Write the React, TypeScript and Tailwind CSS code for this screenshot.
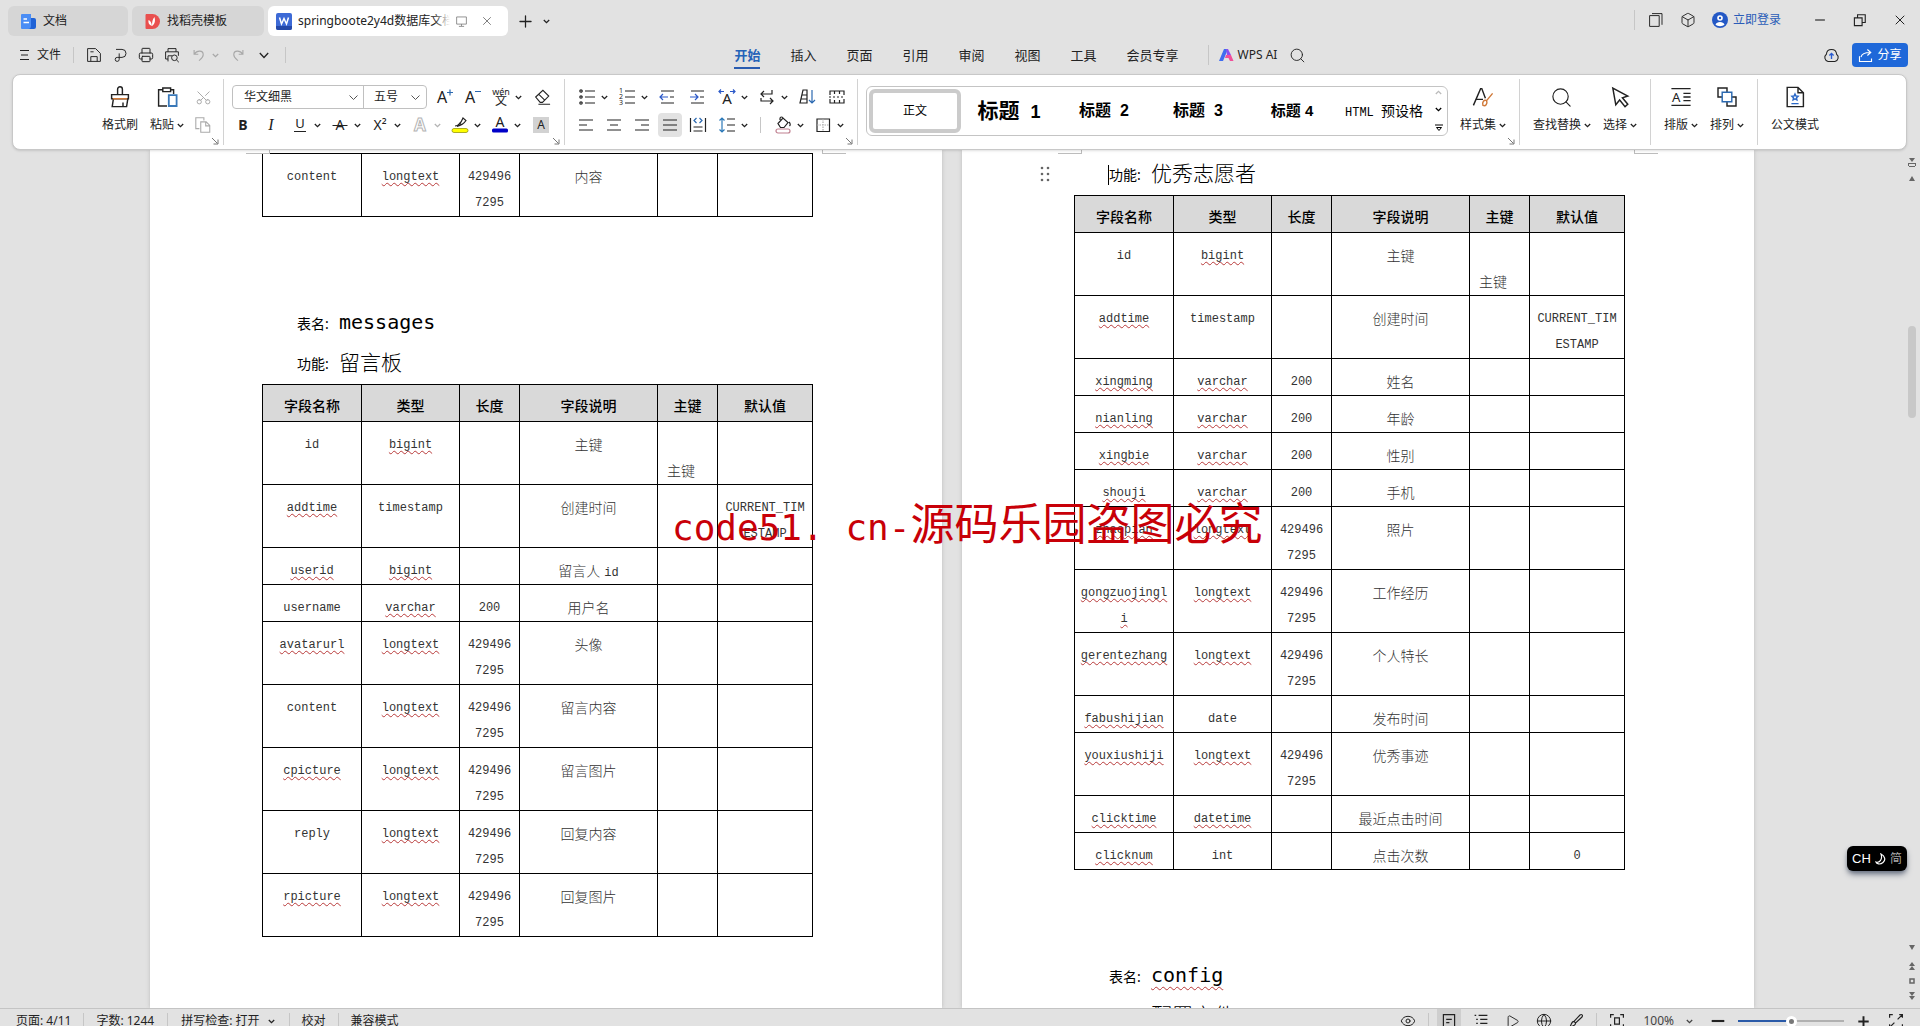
import React from 'react';
import { Box, Eye, Globe, Play, Plus, Printer, Scissors, Search, X } from 'lucide-react';

type Cell = { text: string; typo?: boolean };
type Row = { name: string; type: string; length?: string; note: React.ReactNode; keyed?: boolean; initial?: string };

const LONG = '429496\n7295';

const topRows: Row[] = [{ name: 'content', type: 'longtext', length: LONG, note: '内容' }];

const messageRows: Row[] = [
  { name: 'id', type: 'bigint', note: '主键', keyed: true },
  { name: 'addtime', type: 'timestamp', note: '创建时间', initial: 'CURRENT_TIM\nESTAMP' },
  { name: 'userid', type: 'bigint', note: <>留言人<span className="ml-1 font-['Liberation_Mono',monospace] text-xs font-normal">id</span></> },
  { name: 'username', type: 'varchar', length: '200', note: '用户名' },
  { name: 'avatarurl', type: 'longtext', length: LONG, note: '头像' },
  { name: 'content', type: 'longtext', length: LONG, note: '留言内容' },
  { name: 'cpicture', type: 'longtext', length: LONG, note: '留言图片' },
  { name: 'reply', type: 'longtext', length: LONG, note: '回复内容' },
  { name: 'rpicture', type: 'longtext', length: LONG, note: '回复图片' },
];

const volunteerRows: Row[] = [
  { name: 'id', type: 'bigint', note: '主键', keyed: true },
  { name: 'addtime', type: 'timestamp', note: '创建时间', initial: 'CURRENT_TIM\nESTAMP' },
  { name: 'xingming', type: 'varchar', length: '200', note: '姓名' },
  { name: 'nianling', type: 'varchar', length: '200', note: '年龄' },
  { name: 'xingbie', type: 'varchar', length: '200', note: '性别' },
  { name: 'shouji', type: 'varchar', length: '200', note: '手机' },
  { name: 'zhaopian', type: 'longtext', length: LONG, note: '照片' },
  { name: 'gongzuojingl\ni', type: 'longtext', length: LONG, note: '工作经历' },
  { name: 'gerentezhang', type: 'longtext', length: LONG, note: '个人特长' },
  { name: 'fabushijian', type: 'date', note: '发布时间' },
  { name: 'youxiushiji', type: 'longtext', length: LONG, note: '优秀事迹' },
  { name: 'clicktime', type: 'datetime', note: '最近点击时间' },
  { name: 'clicknum', type: 'int', note: '点击次数', initial: '0' },
];

// words the spell checker accepts
const known = ['id', 'content', 'username', 'reply', 'timestamp', 'date', 'int'];

function Svg({ size = 20, className = '', children }: { size?: number; className?: string; children: React.ReactNode }) {
  return (
    <svg width={size} height={size} viewBox="0 0 20 20" fill="none" stroke="currentColor" strokeWidth="1.2" className={'shrink-0 ' + className}>
      {children}
    </svg>
  );
}

function Caret({ className = '' }: { className?: string }) {
  return (
    <svg width="7" height="5" viewBox="0 0 7 5" fill="none" stroke="currentColor" strokeWidth="1.3" className={'shrink-0 ' + className}>
      <path d="M.8 1l2.7 2.6L6.2 1" />
    </svg>
  );
}

function Corner() {
  return (
    <svg width="8" height="8" viewBox="0 0 8 8" fill="none" stroke="#777" className="absolute right-1 bottom-0">
      <path d="M1 1l5.5 5.5M7 2.5V7H2.5" />
    </svg>
  );
}

function Letter({ x = 10, y = 15, size = 15, children }: { x?: number; y?: number; size?: number; children: string }) {
  return (
    <text x={x} y={y} fontSize={size} textAnchor="middle" fill="currentColor" stroke="none">{children}</text>
  );
}

function Tool({ label, icon, wide, className = 'w-7' }: { label: string; icon: React.ReactNode; wide?: boolean; className?: string }) {
  return wide ? (
    <button aria-label={label} className={'flex h-7 w-10 items-center gap-1 pl-[5px] ' + (className === 'w-7' ? '' : className)}>
      {icon}
      <Caret />
    </button>
  ) : (
    <button aria-label={label} className={'flex h-7 items-center justify-center ' + className}>{icon}</button>
  );
}

function BigTool({ label, icon, caret }: { label: string; icon: React.ReactNode; caret?: boolean }) {
  return (
    <button className="flex flex-col items-center whitespace-nowrap">
      <span className="flex h-7 items-center">{icon}</span>
      <span className="flex h-7 items-center gap-[3px]">
        {label}
        {caret && <Caret />}
      </span>
    </button>
  );
}

function Sep({ className = 'h-5' }: { className?: string }) {
  return <span className={'w-px shrink-0 bg-[#c6c6c6] ' + className} />;
}

function Code({ text, typo }: Cell) {
  return (
    <>
      {text.split('\n').map((line, i) => (
        <span key={i} className="block font-['Liberation_Mono',monospace] text-xs leading-[26px]">
          <span className={typo ? 'underline decoration-[#b83a3a] decoration-wavy decoration-1 underline-offset-2' : ''}>{line}</span>
        </span>
      ))}
    </>
  );
}

function FieldTable({ rows, head = true }: { rows: Row[]; head?: boolean }) {
  const td = 'border border-black pt-[10px] text-center align-top whitespace-nowrap';
  return (
    <table className="w-[550px] table-fixed border-collapse border border-black text-sm leading-[26px] text-[#333]">
      <colgroup>
        <col className="w-[99px]" />
        <col className="w-[98px]" />
        <col className="w-[60px]" />
        <col className="w-[138px]" />
        <col className="w-[60px]" />
        <col className="w-[95px]" />
      </colgroup>
      {head && (
        <thead>
          <tr className="h-[37px] bg-[#d9d9d9] text-black">
            {['字段名称', '类型', '长度', '字段说明', '主键', '默认值'].map(h => (
              <th key={h} className="border border-black pt-2 pb-0.5 leading-[26px] font-medium">{h}</th>
            ))}
          </tr>
        </thead>
      )}
      <tbody>
        {rows.map(r => (
          <tr key={r.name}>
            <td className={td}><Code text={r.name} typo={!known.includes(r.name)} /></td>
            <td className={td}><Code text={r.type} typo={!known.includes(r.type)} /></td>
            <td className={td}>{r.length && <Code text={r.length} />}</td>
            <td className={td + ' font-light'}>{r.note}</td>
            <td className="border border-black pt-[10px] pl-[9px] align-bottom font-light">
              {r.keyed && <><br />主键</>}
            </td>
            <td className={td}>{r.initial && <Code text={r.initial} />}</td>
          </tr>
        ))}
      </tbody>
    </table>
  );
}

function Marks() {
  return (
    <>
      <span className="absolute top-0 left-24 h-1 w-6 border-r border-b border-[#bdbdbd]" />
      <span className="absolute top-0 right-24 h-1 w-6 border-b border-l border-[#bdbdbd]" />
    </>
  );
}

function TabBar() {
  return (
    <div className="flex h-[38px] items-start pt-1.5 pl-2">
      <div className="flex gap-1">
        <button className="flex h-[30px] w-[120px] items-center gap-1.5 rounded-md bg-[#d6d6d6] pl-3">
          <svg width="17" height="17" viewBox="0 0 17 17">
            <path d="M2 1h9v15H2a1 1 0 0 1-1-1V2a1 1 0 0 1 1-1z" fill="#4a8df5" />
            <path d="M11 5h3a2 2 0 0 1 2 2v7a2 2 0 0 1-2 2H8c2 0 3-1 3-3z" fill="#1f62d6" />
            <path d="M3.5 6H7M3.5 9.5H9" stroke="#fff" strokeWidth="1.4" />
          </svg>
          文档
        </button>
        <button className="flex h-[30px] w-[132px] items-center gap-1.5 rounded-md bg-[#d6d6d6] pl-3">
          <svg width="17" height="17" viewBox="0 0 17 17">
            <path d="M2 1h6.5a7.5 7.5 0 0 1 0 15H2.5a1 1 0 0 1-1-1V2z" fill="#e9504f" />
            <path d="M8 13c-3-1-4-3-3.5-6C6.5 8 7.5 9.5 8 13zM8 13c0-4 .5-7 2.5-9 1 4 .5 7-2.5 9z" fill="#fff" />
          </svg>
          找稻壳模板
        </button>
        <div className="flex h-[30px] w-[240px] items-center rounded-md bg-white pl-2">
          <svg width="16" height="17" viewBox="0 0 16 17">
            <rect width="16" height="17" rx="2" fill="#3d6ad6" />
            <path d="M0 13h16v2a2 2 0 0 1-2 2H2a2 2 0 0 1-2-2z" fill="#2448a8" />
            <path d="M3.5 4.500L5.500 11 8 5.500 10.500 11l2-6.500" fill="none" stroke="#fff" strokeWidth="1.5" />
          </svg>
          <span className="relative ml-1.5 w-[152px] overflow-hidden whitespace-nowrap">
            springboote2y4d数据库文档
            <span className="absolute inset-y-0 right-0 w-4 bg-gradient-to-r from-transparent to-white" />
          </span>
          <button aria-label="窗口" className="ml-[5px] text-[#777]">
            <Svg size={13}><path d="M2.500 3h15v11h-15zM10 14v3M6 17.500h8" /></Svg>
          </button>
          <button aria-label="关闭标签" className="ml-3 text-[#777]"><X size={14} strokeWidth={1.6} /></button>
        </div>
      </div>
      <button aria-label="新建" className="mt-[6px] ml-2"><Plus size={19} strokeWidth={1.6} /></button>
      <button aria-label="标签列表" className="mt-[13px] ml-2 flex"><Caret /></button>
      <div className="ml-auto flex h-[28px] items-center pr-3">
        <Sep className="h-5" />
        <button aria-label="多窗口" className="ml-[13px]">
          <Svg size={16}><path d="M2 4.500h12V18H2zM5 2h12.500v14" /></Svg>
        </button>
        <button aria-label="应用" className="ml-4">
          <Box size={16} strokeWidth={1.4} />
        </button>
        <button className="ml-4 flex items-center gap-[5px] text-[#2a5cb8]">
          <svg width="16" height="16" viewBox="0 0 16 16">
            <circle cx="8" cy="8" r="8" fill="#2458c5" />
            <circle cx="8" cy="6" r="2.800" fill="#fff" />
            <circle cx="8" cy="6" r="1.200" fill="#2458c5" />
            <path d="M3.500 12.500c1-3.500 8-3.500 9 0-2 2.300-7 2.300-9 0z" fill="#fff" />
          </svg>
          立即登录
        </button>
        <button aria-label="最小化" className="ml-8"><Svg size={14}><path d="M3 10h14" strokeWidth="1.600" /></Svg></button>
        <button aria-label="还原" className="ml-[26px]">
          <Svg size={14}><path d="M2 7h11v11H2zM6.500 7V2.500h11v11H13" strokeWidth="1.600" /></Svg>
        </button>
        <button aria-label="关闭" className="ml-[25px]"><X size={16} strokeWidth={1.5} /></button>
      </div>
    </div>
  );
}

function MenuBar() {
  const menus = ['插入', '页面', '引用', '审阅', '视图', '工具', '会员专享'];
  return (
    <div className="flex h-9 items-start">
      <div className="flex h-[34px] flex-1 items-center pr-3.5 pl-5">
        <button className="flex items-center gap-2">
          <svg width="9" height="12" viewBox="0 0 9 12" stroke="currentColor"><path d="M0 1.500h9M1 6h7M0 10.500h9" /></svg>
          文件
        </button>
        <Sep className="ml-3 h-4" />
        <button aria-label="保存" className="ml-3">
          <Svg size={16}><path d="M2 2h10l6 6v10H2zM6 18v-6h8v6M5.500 6h4" /></Svg>
        </button>
        <button aria-label="输出为PDF" className="ml-2.5">
          <Svg size={16}><path d="M5 3h7.500a5 5 0 0 1 0 10H6.500a2.500 2.500 0 1 0 2.500 2.500V8" /></Svg>
        </button>
        <button aria-label="打印" className="ml-2.5"><Printer size={16} strokeWidth={1.5} /></button>
        <button aria-label="打印预览" className="ml-2.5">
          <Svg size={16}><path d="M5 6V2h10v4M5 15H2V6h16v5M5 18V11h5" /><circle cx="13" cy="13.500" r="3.500" /><path d="M15.500 16l3 3" /></Svg>
        </button>
        <button aria-label="撤销" className="ml-3 flex items-center gap-1.5 text-[#a8a8a8]">
          <Svg size={14}><path d="M3 3v6h6M3.500 8.500C7 3 16 3 16 9.500c0 4-3 6-6 8.500" strokeWidth="1.600" /></Svg>
          <Caret />
        </button>
        <button aria-label="恢复" className="ml-3 text-[#a8a8a8]">
          <Svg size={14}><path d="M17 3v6h-6M16.500 8.500C13 3 4 3 4 9.500c0 4 3 6 6 8.500" strokeWidth="1.600" /></Svg>
        </button>
        <button aria-label="更多" className="ml-3.5">
          <svg width="10" height="7" viewBox="0 0 10 7" fill="none" stroke="currentColor" strokeWidth="1.300"><path d="M.8 1L5 5.500 9.200 1" /></svg>
        </button>
        <Sep className="ml-4 h-4" />
      </div>
      <nav className="flex h-[34px] items-start gap-[30px] pt-[7px] text-[13px] leading-5">
        <button className="border-b-2 border-[#2a5cb0] pb-0.5 font-bold text-[#2563b8]">开始</button>
        {menus.map(m => <button key={m}>{m}</button>)}
      </nav>
      <div className="flex h-[34px] flex-1 items-center pr-3 pl-[29px]">
        <Sep className="h-5" />
        <button className="ml-2.5 flex items-center gap-1">
          <svg width="15" height="12" viewBox="0 0 15 12">
            <path d="M0 12L5 0h4L4 12z" fill="#3f6cf0" />
            <path d="M7 0h2l3 6H8z" fill="#8a4ff0" />
            <path d="M7 6h5l2.500 6H11L9.500 9H6z" fill="#f0509a" />
          </svg>
          WPS AI
        </button>
        <button aria-label="搜索" className="ml-3"><Search size={17} strokeWidth={1.3} /></button>
        <button aria-label="云同步" className="ml-auto">
          <Svg size={17}>
            <path d="M6 17a4.800 4.800 0 0 1-2-8.500C4.500 1 15.500 1 16 8.500A4.800 4.800 0 0 1 14 17z" />
            <path d="M10 14V8M7.500 10L10 7.500l2.500 2.500" stroke="#2a5cd0" strokeWidth="1.600" />
          </Svg>
        </button>
        <button className="ml-3 flex h-6 w-14 items-center justify-center gap-1 rounded bg-[#1f68d9] text-white">
          <Svg size={15}><path d="M2 11v7h16v-4M4 12c1-4 5-6 12-6M12.500 2L17 6l-4.500 4" strokeWidth="1.500" /></Svg>
          分享
        </button>
      </div>
    </div>
  );
}

function Ribbon() {
  const group = 'relative flex shrink-0 border-r border-[#d2d2d2] mb-1 mt-1 pt-1';
  return (
    <div className="relative z-10 mr-[13px] ml-3 flex h-[76px] overflow-hidden rounded-lg border border-[#c8c8c8] bg-white shadow-sm">
      <div className={group + ' w-[211px] pl-[89px]'}>
        <BigTool label="格式刷" icon={
          <Svg size={24}>
            <path d="M8 8V3.500a2 2 0 0 1 4 0V8M3 8h14v3.500H3zM4.500 11.500L3.500 18h12l1-6.500" />
            <path d="M4 11.500h12" stroke="#d07a3a" />
            <path d="M12.500 14.500V18" />
          </Svg>} />
        <span className="w-3" />
        <BigTool label="粘贴" caret icon={
          <Svg size={24}>
            <path d="M7 4H3v13.500h7M12.500 4h3v3.500M6.500 2.500h6.500v3H6.500z" />
            <path d="M11.500 8.500H18v9h-6.500z" stroke="#3a78b8" strokeWidth="1.500" />
          </Svg>} />
        <div className="ml-[5px] flex flex-col text-[#aaa]">
          <Tool label="剪切" icon={<Scissors size={17} strokeWidth={1.4} className="-rotate-90" />} />
          <Tool label="复制" icon={<Svg size={18}><path d="M6 14H2V2h9v3M7.500 6.500h6l4 4V18h-10zM13 6.500V11h4.500" /></Svg>} />
        </div>
        <Corner />
      </div>

      <div className={group + ' w-[341px] flex-col pl-[5px]'}>
        <div className="flex h-7 items-center">
          <div className="ml-[3px] flex h-6 w-[195px] rounded border border-[#c0c0c0]">
            <label className="relative w-[131px] border-r border-[#c0c0c0]">
              <select aria-label="字体" className="h-full w-full appearance-none pl-[11px] outline-none"><option>华文细黑</option></select>
              <svg width="9" height="6" viewBox="0 0 9 6" fill="none" stroke="#555" className="absolute top-[9px] right-[5px]"><path d="M.5.5l4 4 4-4" /></svg>
            </label>
            <label className="relative flex-1">
              <select aria-label="字号" className="h-full w-full appearance-none pl-[10px] outline-none"><option>五号</option></select>
              <svg width="9" height="6" viewBox="0 0 9 6" fill="none" stroke="#555" className="absolute top-[9px] right-[6px]"><path d="M.5.5l4 4 4-4" /></svg>
            </label>
          </div>
          <Tool label="增大字号" className="ml-[3px] w-7" icon={<Svg><Letter x={8} y={16} size={16}>A</Letter><path d="M13 5.500h6M16 2.500v6" stroke="#2a68b0" /></Svg>} />
          <Tool label="减小字号" icon={<Svg><Letter x={8} y={16} size={16}>A</Letter><path d="M13 4.500h6" stroke="#2a68b0" /></Svg>} />
          <Tool label="拼音指南" wide icon={<Svg><Letter y={8} size={9}>wén</Letter><Letter y={18} size={12}>文</Letter></Svg>} />
          <Tool label="清除格式" className="w-8" icon={<Svg size={18}><path d="M3 10l8-7.500L17.500 9l-7 7H8zM6.500 7l6.500 6.500M6 18h13" /></Svg>} />
        </div>
        <div className="flex h-7 items-center">
          <Tool label="加粗" icon={<span className="text-sm font-bold">B</span>} />
          <Tool label="倾斜" icon={<span className="font-['Liberation_Serif',serif] text-base italic">I</span>} />
          <Tool label="下划线" wide icon={<Svg><Letter y={13} size={13}>U</Letter><path d="M4 16.500h12" /></Svg>} />
          <Tool label="删除线" wide icon={<Svg><Letter size={14}>A</Letter><path d="M2.500 10.500h15" /></Svg>} />
          <Tool label="上标" wide icon={<span className="w-5 text-center text-sm">X²</span>} />
          <Tool label="文字效果" wide className="text-[#b4b4b4]" icon={
            <Svg><text x="10" y="16" fontSize="17" textAnchor="middle" fontWeight="bold" fill="white" strokeWidth="1">A</text></Svg>} />
          <Tool label="突出显示" wide icon={
            <Svg>
              <path d="M5 11c3 0 6-3 8-8l3 2.500c-2 3-5 5-9 6M9 8l3 2" />
              <rect x="2" y="13.500" width="16" height="4" rx="2" fill="#ffff00" stroke="#8a8a00" strokeWidth=".7" />
            </Svg>} />
          <Tool label="字体颜色" wide icon={<Svg><Letter y={12} size={14}>A</Letter><rect x="2" y="13.500" width="16" height="4" rx="1.500" fill="#0000c8" stroke="none" /></Svg>} />
          <Tool label="字符底纹" className="w-8" icon={<span className="flex h-4 w-4 items-center justify-center bg-[#d2d2d2]">A</span>} />
        </div>
        <Corner />
      </div>

      <div className={group + ' w-[293px] flex-col pl-[7px]'}>
        <div className="flex h-7 items-center">
          <Tool label="项目符号" wide icon={<Svg><circle cx="4" cy="4" r="1.200" /><circle cx="4" cy="10" r="1.200" /><circle cx="4" cy="16" r="1.200" /><path d="M8 4h10M8 10h10M8 16h10" /></Svg>} />
          <Tool label="编号" wide icon={<Svg><Letter x={4} y={6} size={7}>1</Letter><Letter x={4} y={12} size={7}>2</Letter><Letter x={4} y={18} size={7}>3</Letter><path d="M8 4h10M8 10h10M8 16h10" /></Svg>} />
          <Tool label="减少缩进" className="w-[30px]" icon={<Svg><path d="M4 4h13M13 10h4M4 16h13" /><path d="M11 10H3M6 7l-3 3 3 3" stroke="#2a58c8" /></Svg>} />
          <Tool label="增加缩进" className="w-[30px]" icon={<Svg><path d="M4 4h13M13 10h4M4 16h13" /><path d="M3 10h8M8 7l3 3-3 3" stroke="#2a58c8" /></Svg>} />
          <Tool label="中文版式" wide icon={<Svg><Letter y={17} size={15}>A</Letter><path d="M2 4.500h5M4 2.500L2 4.500l2 2M18 4.500h-5M16 2.500l2 2-2 2" stroke="#2a58c8" /></Svg>} />
          <Tool label="换行" wide icon={<Svg><path d="M15 3v4H4M7 4L4 7l3 3M4 11v3h12M13 11l3 3-3 3" /></Svg>} />
          <Tool label="排序" className="w-[30px]" icon={<Svg><path d="M3 16L6 3h4v13zM5 8h5M4 12h6" /><path d="M15 3v13M12 13l3 3 3-3" stroke="#2a68b0" /></Svg>} />
          <Tool label="制表位" className="w-[30px]" icon={<Svg><path d="M3 8V4h14v4M3 12v4h14v-4M7.500 4v3M12.500 4v3M7.500 16v-3M12.500 16v-3" /><path d="M2 10h16" strokeDasharray="2 2" /></Svg>} />
        </div>
        <div className="flex h-7 items-center">
          <Tool label="左对齐" icon={<Svg><path d="M3 5h14M3 10h8M3 15h14" /></Svg>} />
          <Tool label="居中" icon={<Svg><path d="M3 5h14M6 10h8M3 15h14" /></Svg>} />
          <Tool label="右对齐" icon={<Svg><path d="M3 5h14M9 10h8M3 15h14" /></Svg>} />
          <button aria-label="两端对齐" className="mx-0.5 flex h-6 w-6 items-center justify-center rounded bg-[#e2e2e2]"><Svg><path d="M3 5h14M3 10h14M3 15h14" /></Svg></button>
          <Tool label="分散对齐" icon={<Svg><path d="M2.500 3v14M17.500 3v14M5.500 12h9M5.500 16h9" /><path d="M8.500 3L6 5.500 8.500 8M11.500 3L14 5.500 11.500 8" stroke="#2a68b0" /></Svg>} />
          <Tool label="行距" wide icon={<Svg><path d="M10 4h8M10 10h8M10 16h8" /><path d="M5 3v14M2.500 5.500L5 3l2.500 2.500M2.500 14.500L5 17l2.500-2.500" stroke="#2a78b8" /></Svg>} />
          <span className="flex w-4 justify-center"><Sep className="h-4" /></span>
          <Tool label="底纹" wide icon={<Svg><path d="M5 8.500l5-5.500 5 4.500-4 5H7.500zM7 5V3.500c0-2 3-2 3 0M16 7c1.500 1.500 1.500 3 .5 4" /><rect x="3" y="14" width="14" height="4" rx="2" stroke="#c08090" /></Svg>} />
          <Tool label="边框" wide icon={<Svg><path d="M4 4h12.500v12.500H4z" /><path d="M10 4v12M4 10h12" stroke="#aaa" strokeDasharray="1.500 1" /></Svg>} />
        </div>
        <Corner />
      </div>

      <div className={group + ' min-w-0 flex-1 basis-0 pl-2'}>
        <div className="mt-[3px] flex h-[50px] min-w-0 flex-1 items-center rounded-md border border-[#c4c4c4] font-['Liberation_Sans','Noto_Sans_CJK_SC',sans-serif] whitespace-nowrap text-black">
          <button className="ml-0.5 h-11 w-[92px] rounded-md border-4 border-[#cbcbcb] text-xs">正文</button>
          <button className="w-24 text-[21px] font-bold">标题 <span className="text-lg">&nbsp;1</span></button>
          <button className="w-[94px] text-base font-bold">标题 &nbsp;2</button>
          <button className="w-[94px] text-base font-bold">标题 &nbsp;3</button>
          <button className="w-[94px] text-[15px] font-bold">标题 4</button>
          <button className="min-w-0 flex-1 overflow-hidden text-left text-sm">
            <span className="mr-2 ml-1.5 block overflow-hidden"><span className="font-['Liberation_Mono',monospace] text-xs">HTML </span>预设格式</span>
          </button>
          <div className="flex w-4 shrink-0 flex-col items-center gap-3">
            <button aria-label="上一行" className="text-[#bbb]"><Caret className="rotate-180" /></button>
            <button aria-label="下一行"><Caret /></button>
            <button aria-label="展开样式"><svg width="8" height="8" viewBox="0 0 8 8" fill="none" stroke="currentColor"><path d="M0 1h8M1.500 3.500L4 6.500l2.500-3z" /></svg></button>
          </div>
        </div>
        <div className="w-[71px] shrink-0 pl-3">
          <BigTool label="样式集" caret icon={
            <Svg size={24}><path d="M2 17L8 3h1l3 8M4.500 12H10" /><path d="M18 7l-5 6M13 13c-2-1-4 1-3 4 2 1 4-1 3-4z" stroke="#d07a3a" /></Svg>} />
        </div>
        <Corner />
      </div>

      <div className={group + ' gap-3 px-[13px]'}>
        <BigTool label="查找替换" caret icon={<Search size={23} strokeWidth={1.2} />} />
        <BigTool label="选择" caret icon={<Svg size={24}><path d="M4 2.500l2.500 14 3.200-4 4.500 5.500 2.300-2-4.500-5.300 4.500-1.500z" /></Svg>} />
      </div>
      <div className={group + ' gap-3 px-[13px]'}>
        <BigTool label="排版" caret icon={<Svg size={24}><path d="M2 3h16M2 17h16M12 7h6M12 10h6M12 13h6" /><Letter x={6} y={14} size={11}>A</Letter></Svg>} />
        <BigTool label="排列" caret icon={<Svg size={24}><path d="M6 10H2.500V2.500H10V6M14 10h3.500v7.500H10V14" /><path d="M6 6h8v8H6z" stroke="#2a68b0" /></Svg>} />
      </div>
      <div className={group + ' border-r-0 pr-[87px] pl-[13px]'}>
        <BigTool label="公文模式" icon={
          <Svg size={24}>
            <path d="M3.500 2h9L17 6.500V18H3.500zM12.500 2v4.500H17" />
            <path d="M10 7.500l.8 1.700 1.800.2-1.300 1.300.3 1.800-1.600-.9-1.600.9.3-1.800-1.300-1.300 1.800-.2zM7 15.500h6" stroke="#2a68c8" />
          </Svg>} />
      </div>
    </div>
  );
}

function Heading({ label, value, mono, typo, caret }: { label: string; value: string; mono?: boolean; typo?: boolean; caret?: boolean }) {
  return (
    <p className="flex h-10 items-center pl-[35px] text-black">
      {caret && <span className="mt-1 -ml-px h-5 w-px bg-black" />}
      <span className="w-[42px] pt-1 text-sm whitespace-nowrap">{label}:</span>
      {mono ? (
        <span className={"font-['DejaVu_Sans_Mono',monospace] text-xl " + (typo ? 'underline decoration-[#b83a3a] decoration-wavy decoration-1 underline-offset-4' : '')}>{value}</span>
      ) : (
        <span className="text-[21px] leading-8 font-light whitespace-nowrap">{value}</span>
      )}
    </p>
  );
}

function Workspace() {
  const page = 'relative w-[792px] shrink-0 overflow-hidden bg-white pt-[3px] pl-28 shadow-[0_0_4px_#bbb]';
  return (
    <main className="relative flex min-h-0 flex-1 overflow-hidden">
      <div className="flex min-w-0 flex-1 justify-center gap-5">
        <section className={page}>
          <Marks />
          <FieldTable rows={topRows} head={false} />
          <div className="pt-[85px] pb-0.5">
            <Heading label="表名" value="messages" mono />
            <Heading label="功能" value="留言板" />
          </div>
          <FieldTable rows={messageRows} />
        </section>
        <section className={page}>
          <Marks />
          <svg width="10" height="16" viewBox="0 0 10 16" fill="#666" className="absolute top-4 left-[78px]">
            {[2, 8, 14].map(y => <g key={y}><circle cx="2" cy={y} r="1.300" /><circle cx="8" cy={y} r="1.300" /></g>)}
          </svg>
          <div className="pb-0.5">
            <Heading label="功能" value="优秀志愿者" caret />
          </div>
          <FieldTable rows={volunteerRows} />
          <div className="pt-[85px]">
            <Heading label="表名" value="config" mono typo />
            <Heading label="功能" value="配置文件" />
          </div>
        </section>
      </div>
      <div className="relative flex w-4 shrink-0 flex-col items-center gap-2 pt-2 pb-2 text-[#666]">
        <svg width="8" height="10" viewBox="0 0 8 10" fill="currentColor"><path d="M1 0h6L4 4zM0 5h8v1H0zM0 9h8V8H0zM0 5h1v4H0zM7 5h1v4H7z" /></svg>
        <svg width="6" height="5" viewBox="0 0 6 5" fill="currentColor"><path d="M0 5l3-5 3 5z" /></svg>
        <span className="absolute top-44 h-[92px] w-2 rounded bg-[#c8c8c8]" />
        <svg width="6" height="5" viewBox="0 0 6 5" fill="currentColor" className="mt-auto mb-1"><path d="M0 0l3 5 3-5z" /></svg>
        <svg width="6" height="8" viewBox="0 0 6 8" fill="currentColor"><path d="M0 4l3-4 3 4zM0 8l3-4 3 4z" /></svg>
        <svg width="6" height="6" viewBox="0 0 6 6" fill="none" stroke="currentColor" strokeWidth="1.500"><path d="M1 1h4v4H1z" /></svg>
        <svg width="6" height="8" viewBox="0 0 6 8" fill="currentColor"><path d="M0 0l3 4 3-4zM0 4l3 4 3-4z" /></svg>
      </div>
      <p className="pointer-events-none absolute top-[338px] left-[672px] font-['DejaVu_Sans_Mono',monospace] text-[36px] leading-[66px] whitespace-nowrap text-[#c80008]">
        code51. cn-<span className="font-['Noto_Sans_CJK_SC',sans-serif] text-[44px]">源码乐园盗图必究</span>
      </p>
      <div className="absolute right-[13px] bottom-[137px] flex h-[25px] w-[60px] items-center justify-center gap-1 rounded-md bg-black text-white shadow-md shadow-gray-500">
        <span className="font-['Liberation_Sans',sans-serif] text-[13px]">CH</span>
        <svg width="11" height="12" viewBox="0 0 11 12" fill="none" stroke="white" strokeWidth="1.200"><path d="M6 1c4 2 5 6 2 8.500C5 12 1.500 11 1 9c3 1 7-2 5-8z" /></svg>
        <span className="text-[#aaa]">简</span>
      </div>
    </main>
  );
}

function StatusBar() {
  return (
    <footer className="h-[18px] shrink-0 border-t border-[#c4c4c4]">
      <div className="flex h-6 items-center whitespace-nowrap">
        <span className="pl-4">页面: 4/11</span>
        <Sep className="mx-3 h-4" />
        <span>字数: 1244</span>
        <Sep className="mx-[13px] h-4" />
        <button className="flex items-center gap-2">拼写检查: 打开 <Caret /></button>
        <Sep className="mr-3 ml-3.5 h-4" />
        <button>校对</button>
        <Sep className="mx-3 h-4" />
        <span>兼容模式</span>
        <div className="ml-auto flex h-6 items-center pr-4">
          <button aria-label="护眼模式"><Eye size={16} strokeWidth={1.5} /></button>
          <Sep className="ml-3 h-4" />
          <button aria-label="页面视图" className="ml-2 flex h-6 w-6 items-center justify-center bg-[#cecece]">
            <Svg size={16}><path d="M3 2h14v16H3zM6.500 8h7M6.500 12h4" strokeWidth="1.500" /></Svg>
          </button>
          <button aria-label="大纲" className="ml-3"><Svg size={16}><path d="M2 3h2M7 3h11M4 8h2M9 8h9M4 13h2M9 13h9M2 18h2M7 18h11" strokeWidth="1.500" /></Svg></button>
          <button aria-label="阅读" className="ml-4"><Play size={15} strokeWidth={1.5} /></button>
          <button aria-label="Web版式" className="ml-4"><Globe size={16} strokeWidth={1.5} /></button>
          <button aria-label="写作模式" className="ml-4"><Svg size={16}><path d="M7.500 10.500L15 2.500c2-1.500 4 .5 2.500 2.500l-8 7.500zM7.500 10.500c-3 0-3 3-5 7 4-1 7-2 7-5z" strokeWidth="1.400" /></Svg></button>
          <Sep className="ml-3 h-4" />
          <button aria-label="适合页面" className="ml-3"><Svg size={16}><path d="M2 6V2h4M14 2h4v4M18 14v4h-4M6 18H2v-4M7 6h6v8H7z" strokeWidth="1.500" /></Svg></button>
          <button className="ml-[18px] flex items-center gap-3 text-[#444]">100% <Caret /></button>
          <button aria-label="缩小" className="ml-[18px]"><Svg size={14}><path d="M1 10h18" strokeWidth="3" /></Svg></button>
          <input
            type="range"
            aria-label="缩放"
            defaultValue={50}
            className="mx-[13px] h-0.5 w-[106px] appearance-none bg-[linear-gradient(to_right,#2a5aa8_50%,#b0b0b0_50%)] [&::-webkit-slider-thumb]:h-[11px] [&::-webkit-slider-thumb]:w-[11px] [&::-webkit-slider-thumb]:appearance-none [&::-webkit-slider-thumb]:rounded-full [&::-webkit-slider-thumb]:border-[3px] [&::-webkit-slider-thumb]:border-white [&::-webkit-slider-thumb]:bg-[#777]"
          />
          <button aria-label="放大"><Svg size={13}><path d="M2 10h16M10 2v16" strokeWidth="3" /></Svg></button>
          <button aria-label="全屏" className="ml-[18px]"><Svg size={16}><path d="M2 6V2h4M14 2h4v4M18 14v4h-4M6 18H2v-4M18 2l-6 6M2 18l6-6" strokeWidth="1.500" /></Svg></button>
        </div>
      </div>
    </footer>
  );
}

export default function App() {
  return (
    <div className="flex h-screen flex-col overflow-hidden bg-[#e2e2e2] font-['Noto_Sans','Noto_Sans_CJK_SC',sans-serif] text-xs text-[#222]">
      <header className="shrink-0">
        <TabBar />
        <MenuBar />
        <Ribbon />
      </header>
      <Workspace />
      <StatusBar />
    </div>
  );
}
